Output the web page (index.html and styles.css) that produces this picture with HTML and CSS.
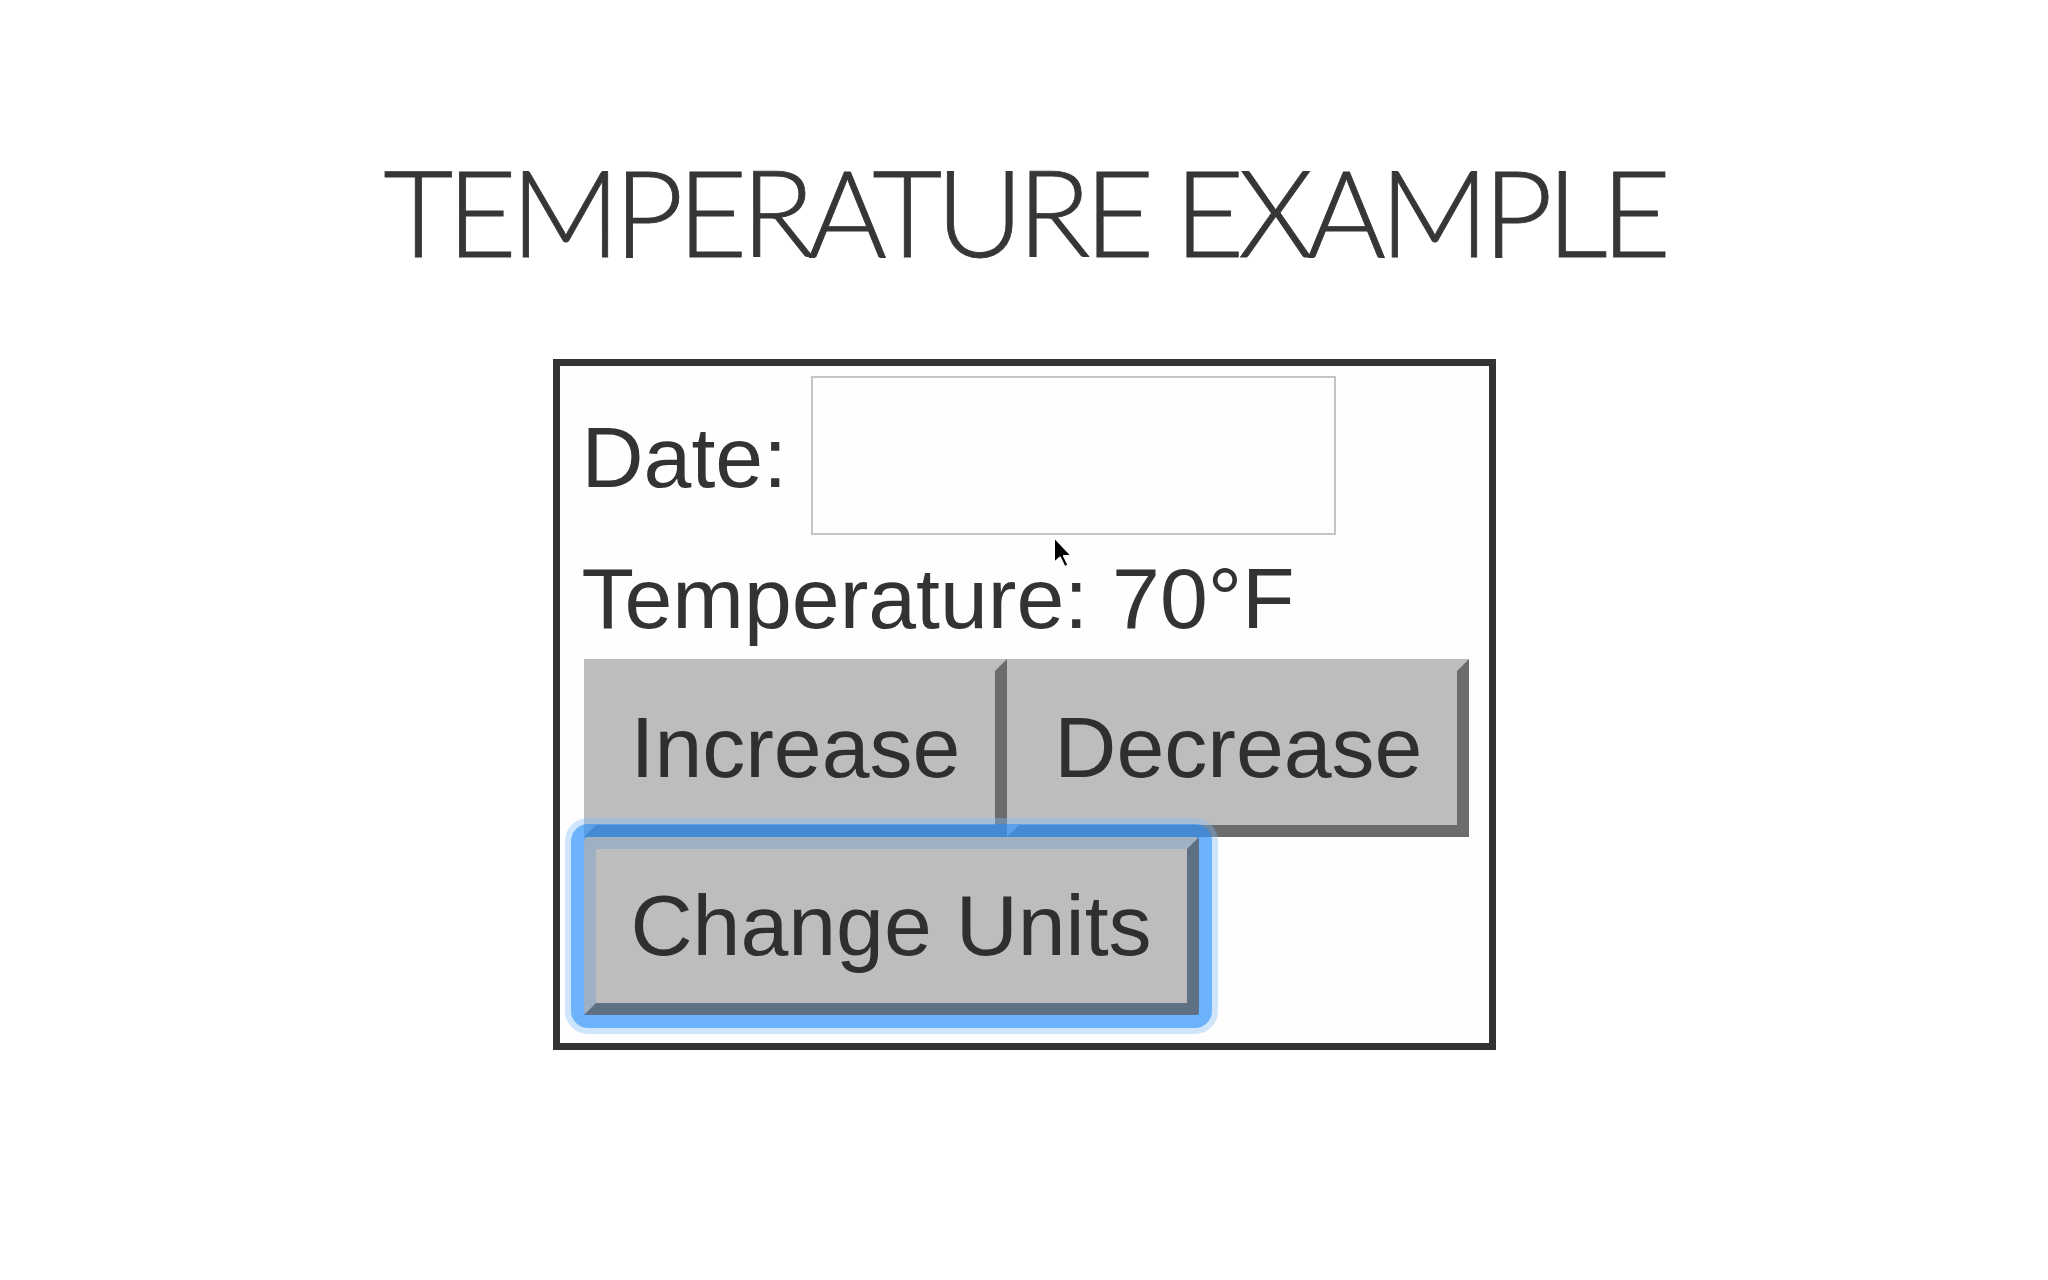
FILE: index.html
```html
<!DOCTYPE html>
<html lang="en">
<head>
<meta charset="utf-8">
<title>Temperature Example</title>
<link rel="stylesheet" href="styles.css">
</head>
<body>
<main class="page">
  <h1 class="title">TEMPERATURE EXAMPLE</h1>
  <section class="card">
    <div class="date-row">
      <label class="label" for="date">Date:</label>
      <input class="date-input" id="date" type="text">
    </div>
    <div class="temp">Temperature: 70°F</div>
    <div class="btn-row">
      <button class="btn">Increase</button><button class="btn">Decrease</button>
    </div>
    <div class="btn-row">
      <button class="btn btn-focus">Change Units</button>
    </div>
  </section>
  <svg class="cursor" width="22" height="34" viewBox="0 0 22 34" aria-hidden="true">
    <path d="M2 1 L2 27 L8 21.5 L12.5 31 L16.5 29.3 L12 20 L20 20 Z" fill="#000" stroke="#fff" stroke-width="2" stroke-linejoin="round"/>
  </svg>
</main>
</body>
</html>
```
FILE: styles.css
```css
html, body {
  margin: 0;
  padding: 0;
  background: #ffffff;
}

.page {
  position: relative;
  display: flex;
  flex-direction: column;
  align-items: center;
  min-height: 1280px;
  color: #333333;
  font-family: "Liberation Sans", Arial, sans-serif;
}

.title {
  margin: 150px 0 0 0;
  font-family: "Lato", "Inter", sans-serif;
  font-weight: 300;
  font-size: 121px;
  line-height: 121px;
  letter-spacing: -6.5px;
  color: #363636;
  -webkit-text-stroke: 0.8px #363636;
  white-space: nowrap;
}

.card {
  margin-top: 88px;
  width: 888px;
  border: 7px solid #333333;
  padding: 10px 19px 28px 22px;
  box-sizing: content-box;
  background: #fefefe;
  font-size: 86px;
}

.date-row {
  display: flex;
  align-items: center;
  gap: 24px;
}

.label {
  line-height: normal;
  position: relative;
  top: 2px;
}

.date-input {
  width: 525px;
  height: 159px;
  box-sizing: border-box;
  border: 2px solid #c4c4c4;
  background: #fefefe;
  margin: 0;
  padding: 0;
  outline: none;
}

.temp {
  margin-top: 14px;
  line-height: normal;
}

.btn-row {
  display: flex;
  margin-left: 2px;
}

.temp + .btn-row {
  margin-top: 11px;
}

.btn {
  font-family: "Liberation Sans", Arial, sans-serif;
  font-size: 86px;
  line-height: normal;
  color: #2f2f2f;
  background: #bebdbe;
  border-style: solid;
  border-width: 12px;
  border-color: #bebdbe #6c6b6e #6c6b6e #bebdbe;
  padding: 27px 35px 28px 35px;
  margin: 0;
  cursor: pointer;
}

.btn-focus {
  position: relative;
}

.btn-focus::after {
  content: "";
  position: absolute;
  inset: -12px;
  border: 12px solid rgba(52, 130, 220, 0.22);
  pointer-events: none;
}

.btn-focus::before {
  content: "";
  position: absolute;
  inset: -25px;
  border: 13px solid rgba(52, 150, 250, 0.72);
  border-radius: 17px;
  box-shadow: 0 0 0 6px rgba(130, 190, 250, 0.38);
  pointer-events: none;
  z-index: 1;
}

.cursor {
  position: absolute;
  left: 1052px;
  top: 536px;
}
```
